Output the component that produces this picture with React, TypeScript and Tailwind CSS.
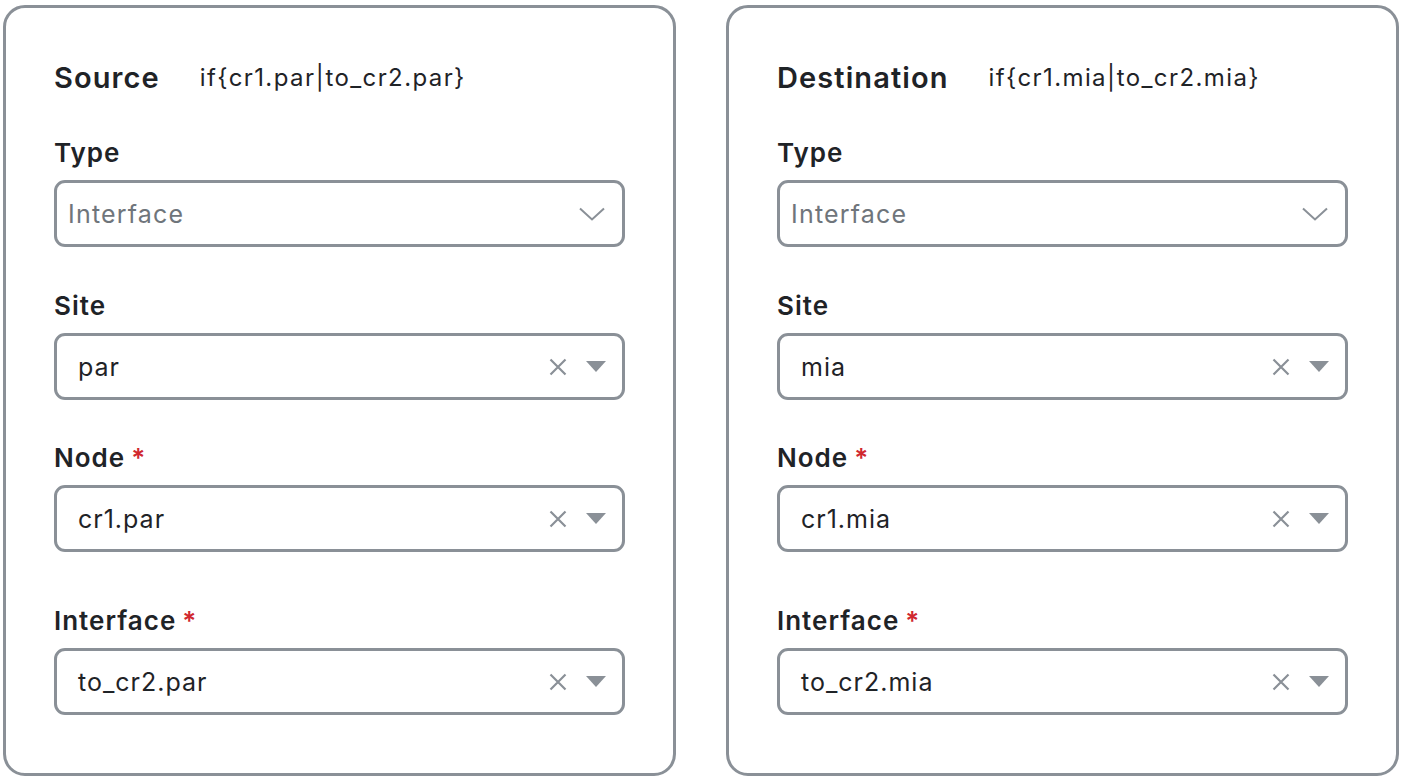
import React from "react"

type Field = {
  label: string
  value: string
  required?: boolean
}

type Panel = {
  title: string
  id: string
  type: string
  fields: Field[]
}

const panels: Panel[] = [
  {
    title: "Source",
    id: "if{cr1.par|to_cr2.par}",
    type: "Interface",
    fields: [
      { label: "Site", value: "par" },
      { label: "Node", value: "cr1.par", required: true },
      { label: "Interface", value: "to_cr2.par", required: true },
    ],
  },
  {
    title: "Destination",
    id: "if{cr1.mia|to_cr2.mia}",
    type: "Interface",
    fields: [
      { label: "Site", value: "mia" },
      { label: "Node", value: "cr1.mia", required: true },
      { label: "Interface", value: "to_cr2.mia", required: true },
    ],
  },
]

function Chevron() {
  return (
    <svg width="26" height="14" viewBox="0 0 26 14" fill="none" stroke="#8a9097" strokeWidth="2">
      <path d="M1 1.5 L13 12.5 L25 1.5" />
    </svg>
  )
}

function Clear() {
  return (
    <svg width="18" height="18" viewBox="0 0 18 18" fill="none" stroke="#8a9097" strokeWidth="2.2">
      <path d="M1.5 1.5 L16.5 16.5 M16.5 1.5 L1.5 16.5" />
    </svg>
  )
}

function Caret() {
  return (
    <svg width="20" height="11" viewBox="0 0 20 11" fill="#8a9097">
      <path d="M0 0 H20 L10 11 Z" />
    </svg>
  )
}

function Label({ text, required }: { text: string; required?: boolean }) {
  return (
    <div className="flex h-[32px] items-center pt-[3px] text-[26px] font-semibold tracking-[1px] text-[#1f2327]">
      <span>{text}</span>
      {required && <span className="ml-[6px] text-[#d0282f]">*</span>}
    </div>
  )
}

function TypeSelect({ value }: { value: string }) {
  return (
    <div className="mt-[13px] flex h-[67px] items-center justify-between rounded-[11px] border-[3px] border-[#8a9097] pl-[11px] pr-[17px]">
      <span className="pt-[3px] text-[25px] tracking-[1.2px] text-[#6f757b]">{value}</span>
      <Chevron />
    </div>
  )
}

function ValueSelect({ value }: { value: string }) {
  return (
    <div className="mt-[13px] flex h-[67px] items-center justify-between rounded-[11px] border-[3px] border-[#8a9097] pl-[21px] pr-[16px]">
      <span className="pt-[2px] text-[25px] tracking-[1px] text-[#1f2327]">{value}</span>
      <div className="flex items-center gap-[19px]">
        <Clear />
        <Caret />
      </div>
    </div>
  )
}

function PanelCard({ panel }: { panel: Panel }) {
  const gaps = ["mt-[41px]", "mt-[40px]", "mt-[51px]"]
  return (
    <div className="h-[771px] w-[673px] rounded-[22px] border-[3px] border-[#8a9097] bg-white px-[48px] pt-[50px]">
      <div className="flex h-[40px] items-center">
        <span className="text-[29px] font-semibold tracking-[1.1px] text-[#1f2327]">{panel.title}</span>
        <span className="ml-[40px] text-[24px] tracking-[1.4px] text-[#1f2327]">{panel.id}</span>
      </div>
      <div className="mt-[37px]">
        <Label text="Type" />
        <TypeSelect value={panel.type} />
      </div>
      {panel.fields.map((f, i) => (
        <div key={f.label} className={gaps[i]}>
          <Label text={f.label} required={f.required} />
          <ValueSelect value={f.value} />
        </div>
      ))}
    </div>
  )
}

export default function App() {
  return (
    <div
      className="flex h-[782px] w-[1406px] gap-[50px] bg-white pl-[3px] pt-[5px]"
      style={{ fontFamily: "Inter, 'Noto Sans', sans-serif" }}
    >
      {panels.map((p) => (
        <PanelCard key={p.title} panel={p} />
      ))}
    </div>
  )
}
